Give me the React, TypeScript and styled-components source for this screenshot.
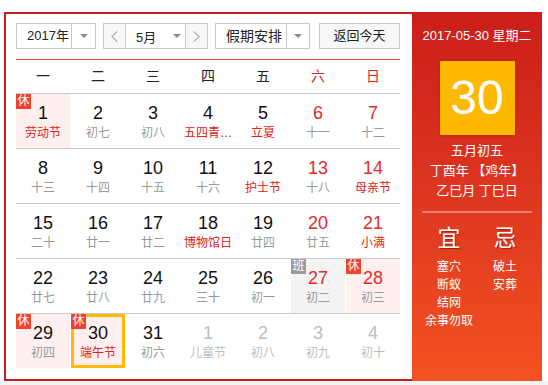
import React from "react";
import styled, { createGlobalStyle, css } from "styled-components";

const Global = createGlobalStyle`
  html, body { margin: 0; padding: 0; background: #fff; }
  body { font-family: "Liberation Sans", Arial, "Noto Sans CJK SC", sans-serif; }
  * { box-sizing: border-box; }
`;

const Page = styled.div`
  width: 548px;
  padding: 12px 0 0 4px;
`;

const Frame = styled.div`
  display: flex;
  width: 538px;
  height: 369px;
`;

const Main = styled.div`
  width: 408px;
  border: 2px solid #c91f1b;
  border-right: none;
  padding: 9px 10px 0 10px;
`;

const Toolbar = styled.div`
  display: flex;
  height: 26px;
  margin-bottom: 10px;
`;

const Box = styled.div<{ $w: number; $ml?: number }>`
  display: flex;
  width: ${(p) => p.$w}px;
  margin-left: ${(p) => p.$ml ?? 0}px;
  height: 26px;
  border: 1px solid #c9c9c9;
  background: #fff;
  color: #222;
`;

const BoxText = styled.div<{ $w: number; $pl: number; $size?: number }>`
  width: ${(p) => p.$w}px;
  padding-left: ${(p) => p.$pl}px;
  font-size: ${(p) => p.$size ?? 13}px;
  line-height: 24px;
  white-space: nowrap;
`;

const Arrow = styled.div<{ $divider?: boolean; $w: number }>`
  width: ${(p) => p.$w}px;
  display: flex;
  align-items: center;
  justify-content: center;
  ${(p) =>
    p.$divider &&
    css`
      border-left: 1px solid #c9c9c9;
    `}
  &::after {
    content: "";
    border-left: 4px solid transparent;
    border-right: 4px solid transparent;
    border-top: 4px solid #8a8a8a;
  }
`;

const NavButton = styled.div<{ $w: number; $side: "l" | "r" }>`
  width: ${(p) => p.$w}px;
  background: #f7f7f7;
  display: flex;
  align-items: center;
  justify-content: center;
  ${(p) => (p.$side === "l" ? "border-right" : "border-left")}: 1px solid #c9c9c9;
`;

const MonthPart = styled.div`
  width: 59px;
  display: flex;
  align-items: center;
  padding-left: 10px;
  font-size: 13px;
  color: #222;
`;

const MonthArrow = styled.span`
  margin-left: 17px;
  border-left: 4px solid transparent;
  border-right: 4px solid transparent;
  border-top: 4px solid #8a8a8a;
`;

const TodayButton = styled.div`
  margin-left: 9px;
  width: 81px;
  height: 26px;
  border: 1px solid #c9c9c9;
  background: #f7f7f7;
  color: #222;
  font-size: 13px;
  line-height: 24px;
  text-align: center;
`;

const WeekHeader = styled.div`
  display: flex;
  gap: 1px;
  width: 384px;
  height: 35px;
  border-top: 1px solid #e2513f;
  border-bottom: 1px solid #cccccc;
`;

const WeekDay = styled.div<{ $weekend?: boolean }>`
  width: 54px;
  text-align: center;
  font-size: 14px;
  line-height: 33px;
  color: ${(p) => (p.$weekend ? "#e02020" : "#222")};
`;

const Row = styled.div<{ $last?: boolean }>`
  display: flex;
  gap: 1px;
  width: 384px;
  height: ${(p) => (p.$last ? 54 : 55)}px;
  border-bottom: ${(p) => (p.$last ? "none" : "1px solid #cccccc")};
`;

type Kind = "rest" | "work" | undefined;

const Cell = styled.div<{ $kind?: Kind; $selected?: boolean }>`
  position: relative;
  width: 54px;
  height: 54px;
  display: flex;
  flex-direction: column;
  align-items: center;
  padding-top: 8px;
  background: ${(p) =>
    p.$kind === "rest" ? "#fff0ef" : p.$kind === "work" ? "#f3f3f3" : "#fff"};
  ${(p) =>
    p.$selected &&
    css`
      box-shadow: inset 0 0 0 3px #ffbb00;
    `}
`;

const DayNum = styled.div<{ $tone: "normal" | "red" | "other" }>`
  font-size: 18px;
  line-height: 22px;
  color: ${(p) =>
    p.$tone === "red" ? "#e42a2a" : p.$tone === "other" ? "#bdbdbd" : "#111"};
`;

const Lunar = styled.div<{ $tone: "gray" | "red" | "other" }>`
  font-size: 12px;
  line-height: 18px;
  white-space: nowrap;
  color: ${(p) =>
    p.$tone === "red" ? "#e02020" : p.$tone === "other" ? "#bdbdbd" : "#999"};
`;

const Badge = styled.div<{ $work?: boolean }>`
  position: absolute;
  top: 0;
  left: 0;
  width: 15px;
  height: 15px;
  background: ${(p) => (p.$work ? "#9b9b9b" : "#f2412f")};
  color: #fff;
  font-size: 12px;
  line-height: 15px;
  text-align: center;
`;

const Panel = styled.div`
  width: 130px;
  height: 369px;
  background: linear-gradient(to bottom, #cb1e1a 0%, #dc3420 45%, #f35222 100%);
  color: #fff;
  display: flex;
  flex-direction: column;
  align-items: center;
  padding-top: 14px;
`;

const DateLine = styled.div`
  font-size: 13px;
  line-height: 20px;
  white-space: nowrap;
`;

const BigDay = styled.div`
  margin-top: 15px;
  width: 75px;
  height: 74px;
  background: #ffb800;
  box-shadow: 0 1px 3px rgba(120, 20, 0, 0.35);
  font-size: 48px;
  line-height: 74px;
  text-align: center;
`;

const LunarLines = styled.div`
  margin-top: 6px;
  font-size: 13px;
  line-height: 20px;
  text-align: center;
  white-space: nowrap;
`;

const Divider = styled.div`
  margin-top: 10px;
  width: 110px;
  height: 2px;
  background: rgba(255, 255, 255, 0.35);
`;

const YiJi = styled.div`
  display: flex;
  margin-top: 10px;
`;

const Column = styled.div`
  width: 56px;
  display: flex;
  flex-direction: column;
  align-items: center;
`;

const ColTitle = styled.div`
  font-size: 23px;
  line-height: 30px;
  font-weight: normal;
  text-shadow: 1px 1px 1px rgba(90, 0, 0, 0.5);
  margin-bottom: 5px;
`;

const ColItem = styled.div`
  font-size: 12px;
  line-height: 18px;
  white-space: nowrap;
`;

const Footer = styled.div`
  height: 6px;
  margin-left: -4px;
  width: 548px;
  background: #f4f4f4;
`;

const Chevron = ({ dir }: { dir: "l" | "r" }) => (
  <svg width="7" height="11" viewBox="0 0 7 11">
    <polyline
      points={dir === "l" ? "6,0.5 1,5.5 6,10.5" : "1,0.5 6,5.5 1,10.5"}
      fill="none"
      stroke="#7a7a7a"
      strokeWidth="1"
    />
  </svg>
);

type Day = {
  n: number;
  l: string;
  red?: boolean;
  fest?: boolean;
  other?: boolean;
  kind?: Kind;
  sel?: boolean;
};

const weeks: Day[][] = [
  [
    { n: 1, l: "劳动节", fest: true, kind: "rest" },
    { n: 2, l: "初七" },
    { n: 3, l: "初八" },
    { n: 4, l: "五四青…", fest: true },
    { n: 5, l: "立夏", fest: true },
    { n: 6, l: "十一", red: true },
    { n: 7, l: "十二", red: true },
  ],
  [
    { n: 8, l: "十三" },
    { n: 9, l: "十四" },
    { n: 10, l: "十五" },
    { n: 11, l: "十六" },
    { n: 12, l: "护士节", fest: true },
    { n: 13, l: "十八", red: true },
    { n: 14, l: "母亲节", red: true, fest: true },
  ],
  [
    { n: 15, l: "二十" },
    { n: 16, l: "廿一" },
    { n: 17, l: "廿二" },
    { n: 18, l: "博物馆日", fest: true },
    { n: 19, l: "廿四" },
    { n: 20, l: "廿五", red: true },
    { n: 21, l: "小满", red: true, fest: true },
  ],
  [
    { n: 22, l: "廿七" },
    { n: 23, l: "廿八" },
    { n: 24, l: "廿九" },
    { n: 25, l: "三十" },
    { n: 26, l: "初一" },
    { n: 27, l: "初二", red: true, kind: "work" },
    { n: 28, l: "初三", red: true, kind: "rest" },
  ],
  [
    { n: 29, l: "初四", kind: "rest" },
    { n: 30, l: "端午节", fest: true, kind: "rest", sel: true },
    { n: 31, l: "初六" },
    { n: 1, l: "儿童节", other: true },
    { n: 2, l: "初八", other: true },
    { n: 3, l: "初九", other: true },
    { n: 4, l: "初十", other: true },
  ],
];

const weekNames = ["一", "二", "三", "四", "五", "六", "日"];

export default function App() {
  return (
    <Page>
      <Global />
      <Frame>
        <Main>
          <Toolbar>
            <Box $w={80}>
              <BoxText $w={55} $pl={10}>2017年</BoxText>
              <Arrow $divider $w={24} />
            </Box>
            <Box $w={105} $ml={7}>
              <NavButton $w={22} $side="l">
                <Chevron dir="l" />
              </NavButton>
              <MonthPart>
                5月
                <MonthArrow />
              </MonthPart>
              <NavButton $w={22} $side="r">
                <Chevron dir="r" />
              </NavButton>
            </Box>
            <Box $w={95} $ml={7}>
              <BoxText $w={70} $pl={10} $size={14}>假期安排</BoxText>
              <Arrow $divider $w={23} />
            </Box>
            <TodayButton>返回今天</TodayButton>
          </Toolbar>
          <WeekHeader>
            {weekNames.map((w, i) => (
              <WeekDay key={w} $weekend={i >= 5}>
                {w}
              </WeekDay>
            ))}
          </WeekHeader>
          {weeks.map((week, wi) => (
            <Row key={wi} $last={wi === weeks.length - 1}>
              {week.map((d, di) => (
                <Cell key={di} $kind={d.kind} $selected={d.sel}>
                  {d.kind && (
                    <Badge $work={d.kind === "work"}>
                      {d.kind === "work" ? "班" : "休"}
                    </Badge>
                  )}
                  <DayNum $tone={d.other ? "other" : d.red ? "red" : "normal"}>
                    {d.n}
                  </DayNum>
                  <Lunar $tone={d.other ? "other" : d.fest ? "red" : "gray"}>
                    {d.l}
                  </Lunar>
                </Cell>
              ))}
            </Row>
          ))}
        </Main>
        <Panel>
          <DateLine>2017-05-30 星期二</DateLine>
          <BigDay>30</BigDay>
          <LunarLines>
            <div>五月初五</div>
            <div>丁酉年 【鸡年】</div>
            <div>乙巳月 丁巳日</div>
          </LunarLines>
          <Divider />
          <YiJi>
            <Column>
              <ColTitle>宜</ColTitle>
              <ColItem>塞穴</ColItem>
              <ColItem>断蚁</ColItem>
              <ColItem>结网</ColItem>
              <ColItem>余事勿取</ColItem>
            </Column>
            <Column>
              <ColTitle>忌</ColTitle>
              <ColItem>破土</ColItem>
              <ColItem>安葬</ColItem>
            </Column>
          </YiJi>
        </Panel>
      </Frame>
      <Footer />
    </Page>
  );
}
